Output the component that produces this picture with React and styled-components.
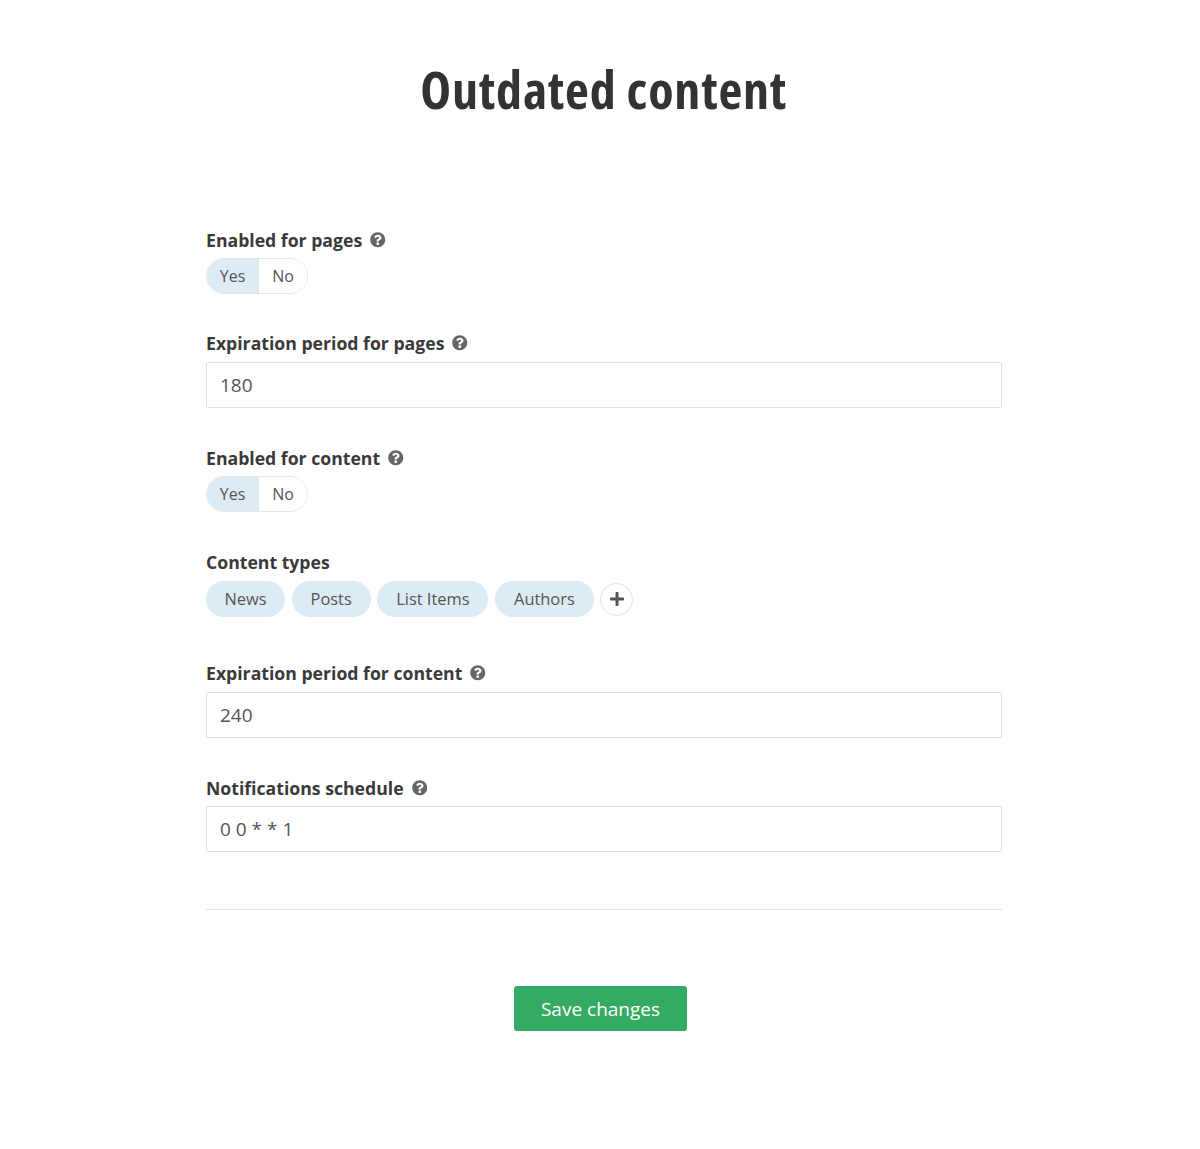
import React from "react";
import styled, { createGlobalStyle } from "styled-components";
import { FaQuestionCircle, FaPlus } from "react-icons/fa";

const Global = createGlobalStyle`
  html, body { margin: 0; padding: 0; background: #fff; }
  body { font-family: "Open Sans", "Liberation Sans", sans-serif; color: #333; }
`;
const Page = styled.div`
  width: 1200px; height: 1149px; box-sizing: border-box;
  padding: 54px 198.5px 0 206px; overflow: hidden;
`;
const Title = styled.h1`
  margin: 0 0 104px; height: 70px; line-height: 69px; text-align: center;
  font-family: "Open Sans", sans-serif; font-stretch: 75%;
  font-size: 52px; font-weight: 700; letter-spacing: 0.8px; color: #333;
`;
const Field = styled.div`
  display: flex; flex-direction: column; align-items: stretch;
  margin-bottom: ${p => p.$mb}px;
`;
const Label = styled.div`
  display: flex; align-items: center; gap: 8px;
  height: 24px; font-size: 17.65px; font-weight: 700; color: #3a3a3a; margin-bottom: ${p => p.$mb}px;
  svg { width: 15.5px; height: 15.5px; color: #666; }
`;
const Toggle = styled.div`
  display: inline-flex; align-self: flex-start; height: 35.5px; box-sizing: border-box;
  border: 1px solid #e6e6e6; border-radius: 18px; overflow: hidden; font-size: 16px; color: #555;
`;
const ToggleOption = styled.div`
  display: flex; align-items: center; justify-content: center;
  width: ${p => p.$w}px; background: ${p => (p.$on ? "#ddebf4" : "#fff")};
  border-right: ${p => (p.$on ? "1px solid #e6e6e6" : "none")};
`;
const Input = styled.input`
  display: block; width: 100%; height: 45.5px; box-sizing: border-box; padding: 0 13px;
  border: 1px solid #e0e0e0; border-radius: 2px; outline: none;
  font-family: inherit; font-size: 19px; color: #555; background: #fff;
`;
const Tags = styled.div`display: flex; align-items: center; gap: 6.7px;`;
const Tag = styled.div`
  display: flex; align-items: center; justify-content: center; height: 36px; box-sizing: border-box;
  padding-bottom: 1px;
  width: ${p => p.$w}px; border-radius: 18px; background: #ddebf4; font-size: 16.4px; color: #555;
`;
const AddButton = styled.div`
  display: flex; align-items: center; justify-content: center;
  width: 33px; height: 33px; box-sizing: border-box; border: 1px solid #e3e3e3; border-radius: 50%;
  background: #fff; color: #555;
  svg { width: 16px; height: 16px; }
`;
const Divider = styled.hr`
  border: 0; border-top: 1px solid #e3e3e3; margin: 57.5px 0 76px;
`;
const Actions = styled.div`display: flex; justify-content: center; padding-right: 6.5px;`;
const SaveButton = styled.button`
  width: 173px; height: 45px; border: 0; border-radius: 3px; background: #35aa63; color: #fff;
  font-family: inherit; font-size: 19px;
`;

const Help = () => <FaQuestionCircle />;

const YesNo = () => (
  <Toggle>
    <ToggleOption $on $w={51}>Yes</ToggleOption>
    <ToggleOption $w={48}>No</ToggleOption>
  </Toggle>
);

export default function App() {
  return (
    <Page>
      <Global />
      <Title>Outdated content</Title>
      <Field $mb={37.5}>
        <Label $mb={6}>Enabled for pages <Help /></Label>
        <YesNo />
      </Field>
      <Field $mb={38.5}>
        <Label $mb={7}>Expiration period for pages <Help /></Label>
        <Input readOnly value="180" />
      </Field>
      <Field $mb={38.5}>
        <Label $mb={6}>Enabled for content <Help /></Label>
        <YesNo />
      </Field>
      <Field $mb={44}>
        <Label $mb={7}>Content types</Label>
        <Tags>
          <Tag $w={79}>News</Tag>
          <Tag $w={79}>Posts</Tag>
          <Tag $w={111}>List Items</Tag>
          <Tag $w={98.7}>Authors</Tag>
          <AddButton><FaPlus /></AddButton>
        </Tags>
      </Field>
      <Field $mb={38.5}>
        <Label $mb={7}>Expiration period for content <Help /></Label>
        <Input readOnly value="240" />
      </Field>
      <Field $mb={0}>
        <Label $mb={6}>Notifications schedule <Help /></Label>
        <Input readOnly value="0 0 * * 1" />
      </Field>
      <Divider />
      <Actions><SaveButton>Save changes</SaveButton></Actions>
    </Page>
  );
}
